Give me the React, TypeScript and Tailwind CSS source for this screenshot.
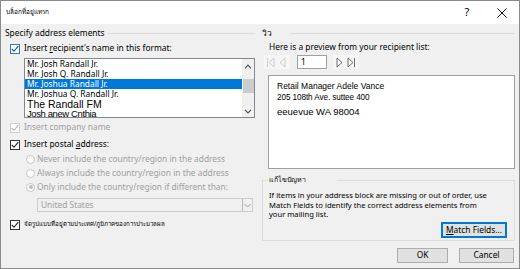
import React from "react";

const names = [
  "Mr. Josh Randall Jr.",
  "Mr. Josh Q. Randall Jr.",
  "Mr. Joshua Randall Jr.",
  "Mr. Joshua Q. Randall Jr.",
];

function Check({ disabled = false, focus = false }: { disabled?: boolean; focus?: boolean }) {
  const border = disabled ? "border-[#cfcfcf]" : focus ? "border-[#2b79c9]" : "border-[#333]";
  const stroke = disabled ? "#b4b4b4" : focus ? "#1d4f85" : "#222";
  return (
    <span className={`w-[10px] h-[10px] bg-white border ${border} flex items-center justify-center shrink-0`}>
      <svg width="8" height="8" viewBox="0 0 8 8">
        <path d="M0.8 4 L3 6.3 L7.3 1.2" fill="none" stroke={stroke} strokeWidth="1.1" />
      </svg>
    </span>
  );
}

function Radio({ on = false }: { on?: boolean }) {
  return (
    <span className="w-[9px] h-[9px] rounded-full border border-[#c6c6c6] bg-white flex items-center justify-center shrink-0">
      {on && <span className="w-[4px] h-[4px] rounded-full bg-[#bcbcbc]" />}
    </span>
  );
}

function Chevron({ up = false }: { up?: boolean }) {
  return (
    <svg width="8" height="5" viewBox="0 0 8 5">
      <path d={up ? "M1 4.3 L4 1.2 L7 4.3" : "M1 0.8 L4 3.8 L7 0.8"} fill="none" stroke="#555" strokeWidth="1.2" />
    </svg>
  );
}

function Nav({ kind, disabled }: { kind: "first" | "prev" | "next" | "last"; disabled?: boolean }) {
  const c = disabled ? "#c8c8c8" : "#606060";
  const d: Record<string, string> = {
    first: "M1.5 1 V10 M8 1 L3 5.5 L8 10 Z",
    prev: "M7 1 L2 5.5 L7 10 Z",
    next: "M2 1 L7 5.5 L2 10 Z",
    last: "M1 1 L6 5.5 L1 10 Z M7.5 1 V10",
  };
  return (
    <span className="w-[12px] h-[14px] flex items-center justify-center">
      <svg width="10" height="11" viewBox="0 0 10 11">
        <path d={d[kind]} fill="none" stroke={c} strokeWidth="0.9" />
      </svg>
    </span>
  );
}

function GroupLabel({ text, gap }: { text: string; gap: string }) {
  return (
    <div className={`flex items-center ${gap} h-[14px] mt-[2px]`}>
      <span className="leading-none">{text}</span>
      <span className="flex-1 h-px bg-[#dcdcdc]" />
    </div>
  );
}

function Btn({ children, w, focus = false }: { children: React.ReactNode; w: string; focus?: boolean }) {
  return (
    <button
      className={`${w} flex items-center justify-center bg-[#e1e1e1] leading-none ${
        focus ? "h-[16px] border-2 border-[#0078d7]" : "h-[15px] border border-[#adadad]"
      }`}
    >
      {children}
    </button>
  );
}

export default function App() {
  return (
    <div className="w-[520px] h-[269px] bg-[#f0f0f0] border border-[#8a8a8a] flex flex-col text-[8.4px] text-black overflow-hidden font-['Noto_Sans','Liberation_Sans',sans-serif]">
      {/* title bar */}
      <div className="h-[23px] bg-white flex items-center justify-between pl-[5px] shrink-0">
        <span className="text-[6.5px] leading-none">บล็อกที่อยู่แทรก</span>
        <div className="flex items-center h-full">
          <span className="w-[36px] text-center text-[11px]">?</span>
          <span className="w-[34px] flex items-center justify-center">
            <svg width="10" height="10" viewBox="0 0 10 10">
              <path d="M0.5 0.5 L9.5 9.5 M9.5 0.5 L0.5 9.5" stroke="#111" strokeWidth="1" />
            </svg>
          </span>
        </div>
      </div>

      <div className="flex flex-1 pl-[4px] gap-[7px]">
        {/* left column */}
        <div className="w-[250px] flex flex-col">
          <GroupLabel text="Specify address elements" gap="gap-[3px]" />

          <div className="flex items-center gap-[4px] h-[13px] mt-[2px] ml-[5px]">
            <Check focus />
            <span className="leading-none">
              Insert <span className="underline">r</span>ecipient's name in this format:
            </span>
          </div>

          <div className="mt-[3px] ml-[19px] w-[231px] h-[60px] bg-white border border-[#828790] flex overflow-hidden">
            <div className="flex-1 flex flex-col">
              {names.map((n, i) => (
                <div
                  key={n}
                  className={`h-[10px] pl-[2px] leading-[9px] ${i === 2 ? "bg-[#0078d7] text-white" : ""}`}
                >
                  {n}
                </div>
              ))}
              <div className="h-[11px] pl-[2px] leading-[11px] text-[10.5px] font-['Liberation_Sans',sans-serif]">The Randall FM</div>
              <div className="h-[7px] pl-[2px] leading-[7px] text-[9.5px] tracking-[-0.4px] font-['Liberation_Sans',sans-serif]">Josh anew Cnthia</div>
            </div>
            <div className="w-[12px] flex flex-col items-center bg-[#f0f0f0]">
              <div className="h-[14px] flex items-center justify-center"><Chevron up /></div>
              <div className="w-[11px] h-[14px] bg-[#cdcdcd] mt-[6px]" />
              <div className="flex-1" />
              <div className="h-[12px] flex items-center justify-center"><Chevron /></div>
            </div>
          </div>

          <div className="flex items-center gap-[4px] h-[13px] mt-[3px] ml-[5px] text-[#a0a0a0]">
            <Check disabled />
            <span className="leading-none">Insert company name</span>
          </div>

          <div className="flex items-center gap-[4px] h-[13px] mt-[4px] ml-[5px]">
            <Check />
            <span className="leading-none">
              Insert postal <span className="underline">a</span>ddress:
            </span>
          </div>

          <div className="flex flex-col ml-[21px] mt-[1px] text-[#a0a0a0]">
            <div className="flex items-center gap-[2px] h-[14px]">
              <Radio />
              <span className="leading-none">Never include the country/region in the address</span>
            </div>
            <div className="flex items-center gap-[2px] h-[14px]">
              <Radio />
              <span className="leading-none">Always include the country/region in the address</span>
            </div>
            <div className="flex items-center gap-[2px] h-[14px]">
              <Radio on />
              <span className="leading-none">Only include the country/region if different than:</span>
            </div>
          </div>

          <div className="mt-[4px] ml-[32px] w-[216px] h-[14px] flex border border-[#cccccc] bg-[#f0f0f0] text-[#a0a0a0]">
            <span className="flex-1 pl-[3px] leading-[12px]">United States</span>
            <span className="w-[10px] border-l border-[#b8b8b8] flex items-center justify-center">
              <svg width="7" height="5" viewBox="0 0 7 5">
                <path d="M0.5 1 L3.5 4 L6.5 1" fill="none" stroke="#9a9a9a" />
              </svg>
            </span>
          </div>

          <div className="flex items-center gap-[4px] h-[13px] mt-[6px] ml-[5px]">
            <Check />
            <span className="leading-none text-[6.2px]">จัดรูปแบบที่อยู่ตามประเทศ/ภูมิภาคของการประมวลผล</span>
          </div>
        </div>

        {/* right column */}
        <div className="w-[253px] flex flex-col">
          <GroupLabel text="วิว" gap="gap-[18px]" />
          <div className="ml-[7px] mt-[1px] h-[12px] leading-[12px]">Here is a preview from your recipient list:</div>

          <div className="ml-[2px] mt-[2px] h-[14px] flex items-center">
            <div className="flex items-center px-[1px] bg-[#f6f6f6]">
              <Nav kind="first" disabled />
              <Nav kind="prev" disabled />
            </div>
            <span className="ml-[7px] w-[30px] h-[14px] bg-white border border-[#a0a0a0] pl-[3px] leading-[12px]">1</span>
            <div className="ml-[6px] flex items-center px-[1px] bg-[#f6f6f6]">
              <Nav kind="next" />
              <Nav kind="last" />
            </div>
          </div>

          <div className="mt-[6px] ml-[6px] w-[247px] h-[94px] bg-white border border-[#a0a0a0] pl-[8px] pt-[4px] font-['Liberation_Sans',sans-serif]">
            <div className="text-[8.5px] leading-[12px]">Retail Manager Adele Vance</div>
            <div className="text-[8.2px] leading-[12px] tracking-[-0.1px]">205 108th Ave. suttee 400</div>
            <div className="text-[9.5px] leading-[14px] mt-[1px]">eeuevue WA 98004</div>
          </div>

          <fieldset className="mt-[5px] w-[253px] h-[67px] border border-[#dcdcdc] pl-[6px] pr-[4px]">
            <legend className="pl-[1px] pr-[31px] ml-[-1px] text-[7px] leading-[12px]">แก้ไขปัญหา</legend>
            <p className="leading-[9.7px] mt-[5px] text-[7.6px] whitespace-nowrap">
              If items in your address block are missing or out of order, use
              <br />
              Match Fields to identify the correct address elements from
              <br />
              your mailing list.
            </p>
            <div className="flex justify-end mt-[2px] pr-[3px]">
              <Btn w="w-[66px]" focus>
                <span className="underline">M</span>atch Fields...
              </Btn>
            </div>
          </fieldset>

          <div className="flex justify-end gap-[11px] mt-[7px] pr-[1px]">
            <Btn w="w-[51px]">OK</Btn>
            <Btn w="w-[55px]">Cancel</Btn>
          </div>
        </div>
      </div>
    </div>
  );
}
